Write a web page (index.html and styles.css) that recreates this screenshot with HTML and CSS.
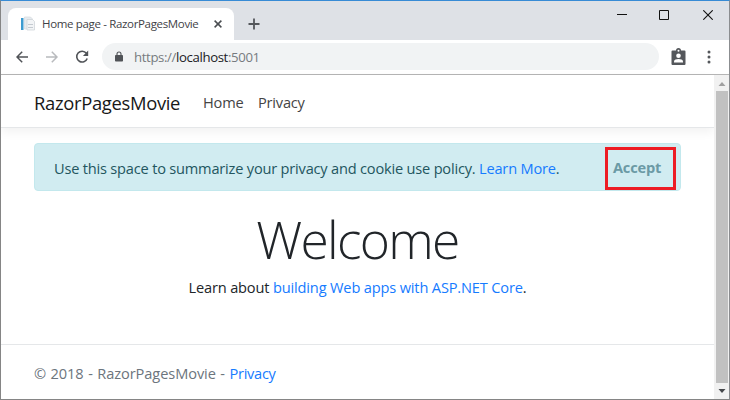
FILE: index.html
```html
<!DOCTYPE html>
<html lang="en">
<head>
<meta charset="utf-8">
<title>Home page - RazorPagesMovie</title>
<link rel="stylesheet" href="styles.css">
</head>
<body>
<div class="window">
  <div class="tabstrip">
    <div class="tab">
      <svg class="favicon" width="16" height="16" viewBox="0 0 16 16"><path d="M1 2h2.500v12H1z" fill="#3c9bd0"/><path d="M4.500 1h6l2 2v10h-8z" fill="#e6ebef" stroke="#d5dade" stroke-width=".7"/><path d="M7 3.500h5.500l2 2v8.500H7z" fill="#f2f4f6" stroke="#cbd1d6" stroke-width=".7"/><path d="M8 8.500h5M8 11.500h5" stroke="#c4cad0"/></svg>
      <span class="tab-title">Home page - RazorPagesMovie</span>
      <svg class="tab-close" width="8" height="8" viewBox="0 0 8 8"><path d="M.6.6l6.800 6.800M7.400.6L.6 7.400" stroke="#4a4d51" stroke-width="1.500"/></svg>
    </div>
    <svg class="new-tab" width="12" height="12" viewBox="0 0 12 12"><path d="M6 .5v11M.5 6h11" stroke="#54575b" stroke-width="1.800"/></svg>
    <div class="controls">
      <svg width="10" height="10" viewBox="0 0 10 10"><path d="M0 4.500h10" stroke="#111"/></svg>
      <svg width="10" height="10" viewBox="0 0 10 10"><path d="M.5.5h9v9h-9z" fill="none" stroke="#111"/></svg>
      <svg class="close" width="10" height="10" viewBox="0 0 10 10"><path d="M.3.3l9.400 9.400M9.700.3L.3 9.700" stroke="#111" stroke-width="1.100"/></svg>
    </div>
  </div>
  <div class="toolbar">
    <svg class="back" width="12" height="12" viewBox="0 0 12 12"><path d="M12 6H1M6.200.8L1 6l5.200 5.200" fill="none" stroke="#505357" stroke-width="1.500"/></svg>
    <svg class="forward" width="12" height="12" viewBox="0 0 12 12"><path d="M0 6h11M5.800.8L11 6l-5.200 5.200" fill="none" stroke="#b8babd" stroke-width="1.500"/></svg>
    <svg class="reload" width="14" height="14" viewBox="0 0 14 14"><path d="M11.400 3.300A5.400 5.400 0 1 0 12.200 8.500" fill="none" stroke="#505357" stroke-width="1.600"/><path d="M13.200.6v5.400H7.900z" fill="#505357"/></svg>
    <div class="address">
      <svg width="8" height="11" viewBox="0 0 8 11"><path d="M2 4.500V3a2 2 0 0 1 4 0v1.500" fill="none" stroke="#505357" stroke-width="1.100"/><rect y="4" width="8" height="6.500" rx=".8" fill="#505357"/></svg>
      <span class="url">https://<b>localhost</b>:5001</span>
    </div>
    <svg class="profile" width="15" height="18" viewBox="0 0 15 18"><path d="M1.500 2.500H5a2.500 2.500 0 0 1 5 0h3.500q1 0 1 1v12.500q0 1-1 1h-12q-1 0-1-1V3.500q0-1 1-1z" fill="#54575b"/><circle cx="7.500" cy="2.700" r="1" fill="#fff"/><circle cx="7.500" cy="7.800" r="2.300" fill="#fff"/><path d="M3 14.500v-1.200c0-1.500 2.500-2.300 4.500-2.300s4.500.8 4.500 2.300v1.200z" fill="#fff"/></svg>
    <svg class="more" width="4" height="14" viewBox="0 0 4 14"><g fill="#54575b"><circle cx="2" cy="2" r="1.500"/><circle cx="2" cy="7" r="1.500"/><circle cx="2" cy="12" r="1.500"/></g></svg>
  </div>
  <div class="viewport">
    <div class="page">
      <header class="navbar">
        <span class="brand">RazorPagesMovie</span>
        <span class="nav-home">Home</span>
        <span class="nav-privacy">Privacy</span>
      </header>
      <main>
        <div class="alert">
          <span class="message">Use this space to summarize your privacy and cookie use policy. <a>Learn More</a>.</span>
          <div class="accept"><span>Accept</span></div>
        </div>
        <h1><span>Welcome</span></h1>
        <p class="learn"><span>Learn about <a>building Web apps with ASP.NET Core</a>.</span></p>
      </main>
      <footer><span class="copyright">© 2018 - RazorPagesMovie - <a>Privacy</a></span></footer>
    </div>
    <div class="scrollbar">
      <svg width="14" height="16" viewBox="0 0 14 16"><path d="M4.500 11L8 7l3.500 4z" fill="#a0a0a0"/></svg>
      <div class="thumb"></div>
      <svg width="14" height="16" viewBox="0 0 14 16"><path d="M4.500 6h7L8 10z" fill="#45474b"/></svg>
    </div>
  </div>
</div>
</body>
</html>
```
FILE: styles.css
```css
* { box-sizing: border-box; }
body { margin: 0; font-family: "Open Sans", "Noto Sans", sans-serif; font-size: 14.6px; color: #212529; background: #fff; }
svg { display: block; flex: none; }
span { white-space: nowrap; }
a { color: #167bff; }
.window { width: 730px; height: 400px; display: flex; flex-direction: column; border: 1px solid #858585; border-top-color: #378bd5; border-right-color: #8b8d90; overflow: hidden; }
.tabstrip { height: 39px; flex: none; display: flex; background: #dee1e6; }
.tab { width: 226px; height: 32px; margin: 7px 0 0 7px; padding: 0 12px; display: flex; align-items: center; background: #fff; border-radius: 8px 8px 0 0; }
.tab-title { margin-left: 6px; font-size: 11.5px; letter-spacing: -.34px; line-height: 32px; color: #3f4246; width: 160px; }
.tab-close { margin-left: 12px; }
.new-tab { margin: 17px 0 0 14px; }
.controls { display: flex; gap: 32px; margin: 9px 16px 0 auto; }
.close { margin-left: 2px; }
.toolbar { height: 35px; flex: none; display: flex; align-items: center; padding: 0 16px 1px 15px; border-bottom: 1px solid #b5b5b5; }
.forward { margin-left: 18px; }
.reload { margin-left: 17px; }
.address { width: 557px; height: 27px; margin-left: 13px; padding-left: 13px; display: flex; align-items: center; border-radius: 14px; background: #f1f3f4; }
.url { margin-left: 11px; font-size: 13.2px; letter-spacing: -.37px; color: #777b7f; }
.url b { font-weight: 400; color: #202124; }
.profile { margin-left: 12px; }
.more { margin-left: 21px; }
.viewport { flex: 1; display: flex; min-height: 0; }
.page { flex: 1; display: flex; flex-direction: column; }
.navbar { height: 53px; flex: none; display: flex; align-items: center; padding: 2px 0 0 33px; border-bottom: 1px solid #e5e7e9; box-shadow: 0 4px 10px rgba(0,0,0,.055); }
.brand { width: 169px; font-size: 18.4px; letter-spacing: -.32px; color: #181818; }
.nav-home { width: 55px; letter-spacing: -.2px; color: #444; }
.nav-privacy { letter-spacing: -.2px; color: #444; }
main { flex: 1; padding: 15px 33px 0 33px; }
.alert { height: 48px; display: flex; align-items: center; justify-content: space-between; padding: 0 4px 0 19px; background: #d1ecf1; border: 1px solid #c3e8ed; border-radius: 4px; color: #23565f; }
.message { letter-spacing: -.2px; padding-top: 1px; }
.accept { width: 71px; height: 43px; margin-top: 2px; padding: 0 0 2px 5px; border: 3px solid #ed1c24; display: flex; align-items: center; font-weight: 700; letter-spacing: -.2px; color: #6b9aa5; }
h1 { margin: 14px 0 0; text-align: center; font-size: 51.5px; letter-spacing: -1.7px; line-height: 68px; font-weight: 300; }
.learn { margin: 4px 0 0; text-align: center; letter-spacing: -.16px; line-height: 20px; }
footer { height: 55px; flex: none; border-top: 1px solid #e5e7e9; padding-left: 33px; line-height: 57px; color: #6c757d; }
.copyright { letter-spacing: -.08px; word-spacing: .8px; }
.copyright a { letter-spacing: -.28px; }
.scrollbar { width: 15px; display: flex; flex-direction: column; background: #f1f1f1; }
.thumb { flex: 1; margin: 0 1px 0 2px; background: #c1c1c1; }
```
